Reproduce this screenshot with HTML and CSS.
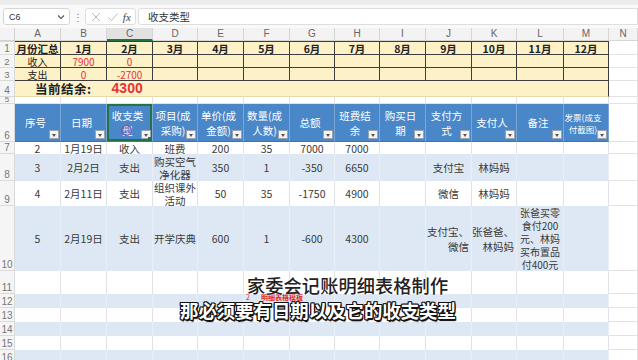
FILE: index.html
```html
<!DOCTYPE html>
<html>
<head>
<meta charset="utf-8">
<link rel="stylesheet" href="styles.css">
</head>
<body>
<div class="app">
  <div class="topstrip"></div>
  <div class="fbar">
    <div class="namebox"><span>C6</span>
      <svg class="chev" width="8" height="6" viewBox="0 0 8 6"><path d="M1 1.5 L4 4.5 L7 1.5" fill="none" stroke="#555" stroke-width="1.1"/></svg>
    </div>
    <div class="dots">⋮</div>
    <div class="ctrls">
      <svg width="12" height="12" viewBox="0 0 12 12"><path d="M2 2 L10 10 M10 2 L2 10" stroke="#bbb" stroke-width="1"/></svg>
      <svg width="12" height="12" viewBox="0 0 12 12"><path d="M1.5 6.5 L4.5 9.5 L10.5 2.5" fill="none" stroke="#bbb" stroke-width="1"/></svg>
      <span class="fx">fx</span>
    </div>
    <div class="finput">收支类型</div>
  </div>

  <div class="sheet">
    <div class="row rh-head">
      <div class="c corner"></div>
      <div class="c ch">A</div><div class="c ch">B</div><div class="c ch selc">C</div><div class="c ch">D</div><div class="c ch">E</div><div class="c ch">F</div><div class="c ch">G</div><div class="c ch">H</div><div class="c ch">I</div><div class="c ch">J</div><div class="c ch">K</div><div class="c ch">L</div><div class="c ch">M</div><div class="c ch">N</div>
    </div>

    <div class="row r1">
      <div class="c rn">1</div>
      <div class="c y b">月份汇总</div><div class="c y b">1月</div><div class="c y b">2月</div><div class="c y b">3月</div><div class="c y b">4月</div><div class="c y b">5月</div><div class="c y b">6月</div><div class="c y b">7月</div><div class="c y b">8月</div><div class="c y b">9月</div><div class="c y b">10月</div><div class="c y b">11月</div><div class="c y b">12月</div><div class="c w"></div>
    </div>
    <div class="row r2">
      <div class="c rn">2</div>
      <div class="c y">收入</div><div class="c y red">7900</div><div class="c y red">0</div><div class="c y"></div><div class="c y"></div><div class="c y"></div><div class="c y"></div><div class="c y"></div><div class="c y"></div><div class="c y"></div><div class="c y"></div><div class="c y"></div><div class="c y"></div><div class="c w"></div>
    </div>
    <div class="row r3">
      <div class="c rn">3</div>
      <div class="c y">支出</div><div class="c y red">0</div><div class="c y red">-2700</div><div class="c y"></div><div class="c y"></div><div class="c y"></div><div class="c y"></div><div class="c y"></div><div class="c y"></div><div class="c y"></div><div class="c y"></div><div class="c y"></div><div class="c y"></div><div class="c w"></div>
    </div>
    <div class="row r4">
      <div class="c rn">4</div>
      <div class="c ybal"><span class="ballabel">当前结余:</span><span class="balval">4300</span></div>
      <div class="c w"></div>
    </div>
    <div class="row r5">
      <div class="c rn">5</div>
      <div class="c w"></div><div class="c w"></div><div class="c w"></div><div class="c w"></div><div class="c w"></div><div class="c w"></div><div class="c w"></div><div class="c w"></div><div class="c w"></div><div class="c w"></div><div class="c w"></div><div class="c w"></div><div class="c w"></div><div class="c w"></div>
    </div>

    <div class="row r6">
      <div class="c rn">6</div>
      <div class="c hd"><span>序号</span><i class="flt"></i></div>
      <div class="c hd"><span>日期</span><i class="flt"></i></div>
      <div class="c hd sel"><span>收支类<br>型</span><i class="flt"></i><b class="cursor"></b><b class="handle"></b></div>
      <div class="c hd"><span>项目(成<br>采购)</span><i class="flt"></i></div>
      <div class="c hd"><span>单价(成<br>金额)</span><i class="flt"></i></div>
      <div class="c hd"><span>数量(成<br>人数)</span><i class="flt"></i></div>
      <div class="c hd"><span>总额</span><i class="flt"></i></div>
      <div class="c hd"><span>班费结<br>余</span><i class="flt"></i></div>
      <div class="c hd"><span>购买日<br>期</span><i class="flt"></i></div>
      <div class="c hd"><span>支付方<br>式</span><i class="flt"></i></div>
      <div class="c hd"><span>支付人</span><i class="flt"></i></div>
      <div class="c hd"><span>备注</span><i class="flt"></i></div>
      <div class="c hd small"><span>发票(成支<br>付截图)</span><i class="flt"></i></div>
      <div class="c w"></div>
    </div>

    <div class="row r7">
      <div class="c rn">7</div>
      <div class="c d">2</div><div class="c d">1月19日</div><div class="c d">收入</div><div class="c d">班费</div><div class="c d">200</div><div class="c d">35</div><div class="c d">7000</div><div class="c d">7000</div><div class="c d"></div><div class="c d"></div><div class="c d"></div><div class="c d"></div><div class="c d"></div><div class="c w"></div>
    </div>
    <div class="row r8">
      <div class="c rn">8</div>
      <div class="c d lb">3</div><div class="c d lb">2月2日</div><div class="c d lb">支出</div><div class="c d lb tl">购买空气<br>净化器</div><div class="c d lb">350</div><div class="c d lb">1</div><div class="c d lb">-350</div><div class="c d lb">6650</div><div class="c d lb"></div><div class="c d lb">支付宝</div><div class="c d lb">林妈妈</div><div class="c d lb"></div><div class="c d lb"></div><div class="c w"></div>
    </div>
    <div class="row r9">
      <div class="c rn">9</div>
      <div class="c d">4</div><div class="c d">2月11日</div><div class="c d">支出</div><div class="c d tl">组织课外<br>活动</div><div class="c d">50</div><div class="c d">35</div><div class="c d">-1750</div><div class="c d">4900</div><div class="c d"></div><div class="c d">微信</div><div class="c d">林妈妈</div><div class="c d"></div><div class="c d"></div><div class="c w"></div>
    </div>
    <div class="row r10">
      <div class="c rn">10</div>
      <div class="c d lb">5</div><div class="c d lb">2月19日</div><div class="c d lb">支出</div><div class="c d lb">开学庆典</div><div class="c d lb">600</div><div class="c d lb">1</div><div class="c d lb">-600</div><div class="c d lb">4300</div><div class="c d lb"></div><div class="c d lb ra">支付宝、<br>微信</div><div class="c d lb ra">张爸爸、<br>林妈妈</div><div class="c d lb note">张爸买零<br>食付200<br>元、林妈<br>买布置品<br>付400元</div><div class="c d lb"></div><div class="c w"></div>
    </div>
    <div class="row r11">
      <div class="c rn">11</div>
      <div class="c d"></div><div class="c d"></div><div class="c d"></div><div class="c d"></div><div class="c d"></div><div class="c d"></div><div class="c d"></div><div class="c d"></div><div class="c d"></div><div class="c d"></div><div class="c d"></div><div class="c d"></div><div class="c d"></div><div class="c w"></div>
    </div>
    <div class="row r12">
      <div class="c rn">12</div>
      <div class="c d lb"></div><div class="c d lb"></div><div class="c d lb"></div><div class="c d lb"></div><div class="c d lb"></div><div class="c d lb"></div><div class="c d lb"></div><div class="c d lb"></div><div class="c d lb"></div><div class="c d lb"></div><div class="c d lb"></div><div class="c d lb"></div><div class="c d lb"></div><div class="c w"></div>
    </div>
    <div class="row r13">
      <div class="c rn">13</div>
      <div class="c d"></div><div class="c d"></div><div class="c d"></div><div class="c d"></div><div class="c d"></div><div class="c d"></div><div class="c d"></div><div class="c d"></div><div class="c d"></div><div class="c d"></div><div class="c d"></div><div class="c d"></div><div class="c d"></div><div class="c w"></div>
    </div>
    <div class="row r14">
      <div class="c rn">14</div>
      <div class="c d lb"></div><div class="c d lb"></div><div class="c d lb"></div><div class="c d lb"></div><div class="c d lb"></div><div class="c d lb"></div><div class="c d lb"></div><div class="c d lb"></div><div class="c d lb"></div><div class="c d lb"></div><div class="c d lb"></div><div class="c d lb"></div><div class="c d lb"></div><div class="c w"></div>
    </div>
    <div class="row r15">
      <div class="c rn">15</div>
      <div class="c d"></div><div class="c d"></div><div class="c d"></div><div class="c d"></div><div class="c d"></div><div class="c d"></div><div class="c d"></div><div class="c d"></div><div class="c d"></div><div class="c d"></div><div class="c d"></div><div class="c d"></div><div class="c d"></div><div class="c w"></div>
    </div>
    <div class="row r16">
      <div class="c rn">16</div>
      <div class="c d lb"></div><div class="c d lb"></div><div class="c d lb"></div><div class="c d lb"></div><div class="c d lb"></div><div class="c d lb"></div><div class="c d lb"></div><div class="c d lb"></div><div class="c d lb"></div><div class="c d lb"></div><div class="c d lb"></div><div class="c d lb"></div><div class="c d lb"></div><div class="c w"></div>
    </div>
  </div>

  <div class="sub-red"><span class="num">2</span>明细表格模板</div>
  <div class="sub1">家委会记账明细表格制作</div>
  <div class="sub2">那必须要有日期以及它的收支类型</div>
</div>
</body>
</html>
```

FILE: styles.css
```css
* { box-sizing: border-box; }
html, body { margin: 0; padding: 0; }
body {
  width: 638px; height: 360px; overflow: hidden; background: #fff;
  font-family: "Noto Sans CJK SC", "Noto Sans", sans-serif;
  color: #333;
}
.app { position: relative; width: 638px; height: 360px; overflow: hidden; }

.topstrip { height: 5px; background: #ececec; }
.fbar {
  height: 23px; display: flex; align-items: center; background: #f9f9f9;
  padding-left: 3px;
}
.namebox {
  width: 67px; height: 17px; border: 1px solid #d6d6d6; border-radius: 3px; background: #fff;
  display: flex; align-items: center; justify-content: space-between; padding: 0 4px 0 5px;
  font-family: "Liberation Sans", sans-serif; font-size: 9px; color: #333;
}
.dots { width: 15px; text-align: center; font-size: 10px; color: #777; line-height: 1; }
.ctrls {
  width: 51px; height: 17px; border: 1px solid #dedede; border-radius: 3px; background: #fff;
  display: flex; align-items: center; justify-content: space-around; padding: 0 2px;
}
.fx { font-family: "Liberation Serif", serif; font-style: italic; font-size: 11px; color: #444; }
.finput {
  flex: 1; height: 17px; margin-left: 2px; border: 1px solid #dedede; border-radius: 3px 0 0 3px; background: #fff;
  padding-left: 9px; font-size: 10.5px; line-height: 15px; color: #333;
}

.sheet { display: flex; flex-direction: column; }
.row {
  display: grid;
  grid-template-columns: 15px 46px 46px 46px 45px 46px 46px 45px 45px 46px 46px 45px 47px 45px 29px;
}
.c {
  border-right: 1px solid #dadada; border-bottom: 1px solid #dadada;
  display: flex; align-items: center; justify-content: center; text-align: center;
  font-size: 10.5px; line-height: 12px; overflow: hidden; position: relative; white-space: nowrap;
}
.rh-head { height: 13px; margin-top: 0; }
.corner { background: #f3f3f3; border-color: #d0d0d0; }
.ch { background: #f3f3f3; color: #666; font-family: "Liberation Sans", sans-serif; font-size: 10px; border-color: #d6d6d6; }
.selc { background: #e2e2e2; border-bottom: 2px solid #217346; }
.rn {
  background: #f5f5f5; color: #777; font-family: "Liberation Sans", sans-serif; font-size: 10px;
  border-color: #dadada; align-items: flex-end; line-height: 11px;
}

.r1 { height: 14px; } .r2 { height: 13px; } .r3 { height: 13px; } .r4 { height: 16px; } .r5 { height: 7px; }
.r6 { height: 38px; } .r7 { height: 12px; } .r8 { height: 27px; } .r9 { height: 25px; } .r10 { height: 65px; }
.r11 { height: 23px; } .r12, .r13, .r14, .r15, .r16 { height: 14px; }
.r5 .rn { font-size: 8px; line-height: 7px; }

.y { background: #fdf1c8; border-right: 1px solid #3d3d3d; border-bottom: 1px solid #3d3d3d; color: #222; line-height: 11px; }
.r2 .y, .r3 .y { font-size: 10px; line-height: 11px; }
.r2 .rn, .r3 .rn { line-height: 11px; font-size: 9.5px; }
.r1 .y { border-top: 1px solid #3d3d3d; }
.r1 .rn { border-top: 1px solid #dadada; }
.b { font-weight: bold; font-size: 10.5px; }
.red { color: #e2353a; }
.w { background: #fff; border-right: 1px solid #e2e2e2; border-bottom: 1px solid #e2e2e2; }

.ybal {
  grid-column: span 13; background: #fdf1c8; border-right: 1px solid #3d3d3d; border-bottom: 1px solid #e9d9a8;
  justify-content: flex-start; padding-left: 20px; line-height: 15px; overflow: visible;
}
.ballabel { font-weight: bold; font-size: 12.5px; line-height: 15px; color: #222; letter-spacing: 0.5px; }
.balval { margin-left: 20px; font-family: "Liberation Sans", sans-serif; font-weight: bold; font-size: 14px; line-height: 15px; color: #e2353a; }

.hd {
  background: #4a87c8; color: #fff; border-right: 1px solid #7aa7d8; border-bottom: 1px solid #3a74b2;
  font-size: 10.5px; line-height: 15px; padding-right: 4px;
}
.hd.small { font-size: 8.5px; line-height: 12px; padding-right: 6px; }
.flt {
  position: absolute; right: 1px; bottom: 2px; width: 10px; height: 9px;
  background: #f4f4f4; border: 1px solid #9aa5b3;
}
.flt::after {
  content: ""; position: absolute; left: 2px; top: 3px;
  border-left: 2.5px solid transparent; border-right: 2.5px solid transparent; border-top: 3px solid #555;
}
.sel { box-shadow: inset 0 0 0 2px #217346; }
.handle { position: absolute; right: 0; bottom: 0; width: 4px; height: 4px; background: #217346; }
.cursor {
  position: absolute; left: 14px; top: 21px; width: 11px; height: 11px; border-radius: 50%;
  border: 1.5px solid #b03a8a; background: rgba(180, 60, 140, 0.25);
}

.d { background: #fff; border-right: 1px solid #dfe3e8; border-bottom: none; color: #3a3a3a; font-size: 10.5px; }
.d.lb { background: #dde8f4; border-right: 1px solid #e9eff6; }
.tl { line-height: 13px; }
.ra { text-align: right; justify-content: flex-end; padding-right: 2px; line-height: 15px; }
.note { line-height: 13px; font-size: 10px; }
.r7 .d { line-height: 11px; }

.sub1 {
  position: absolute; left: 247px; top: 274px;
  font-size: 18.2px; line-height: 22px; font-weight: 500; color: #222; letter-spacing: 0.1px;
  text-shadow: 0 0 2px #fff, 0 0 2px #fff;
}
.sub2 {
  position: absolute; left: 180px; top: 298px;
  font-size: 18.4px; line-height: 24px; font-weight: bold; color: #fff;
  text-shadow: -1px -1px 0 #111, 1px -1px 0 #111, -1px 1px 0 #111, 1px 1px 0 #111, 0 1px 0 #111, 0 -1px 0 #111, 1px 0 0 #111, -1px 0 0 #111, 1px 2px 1px #000;
}
.sub-red {
  position: absolute; left: 246px; top: 293px; font-size: 7px; color: #e02626; font-weight: bold; line-height: 8px;
}
.sub-red .num { margin-right: 11px; font-weight: normal; }
```
